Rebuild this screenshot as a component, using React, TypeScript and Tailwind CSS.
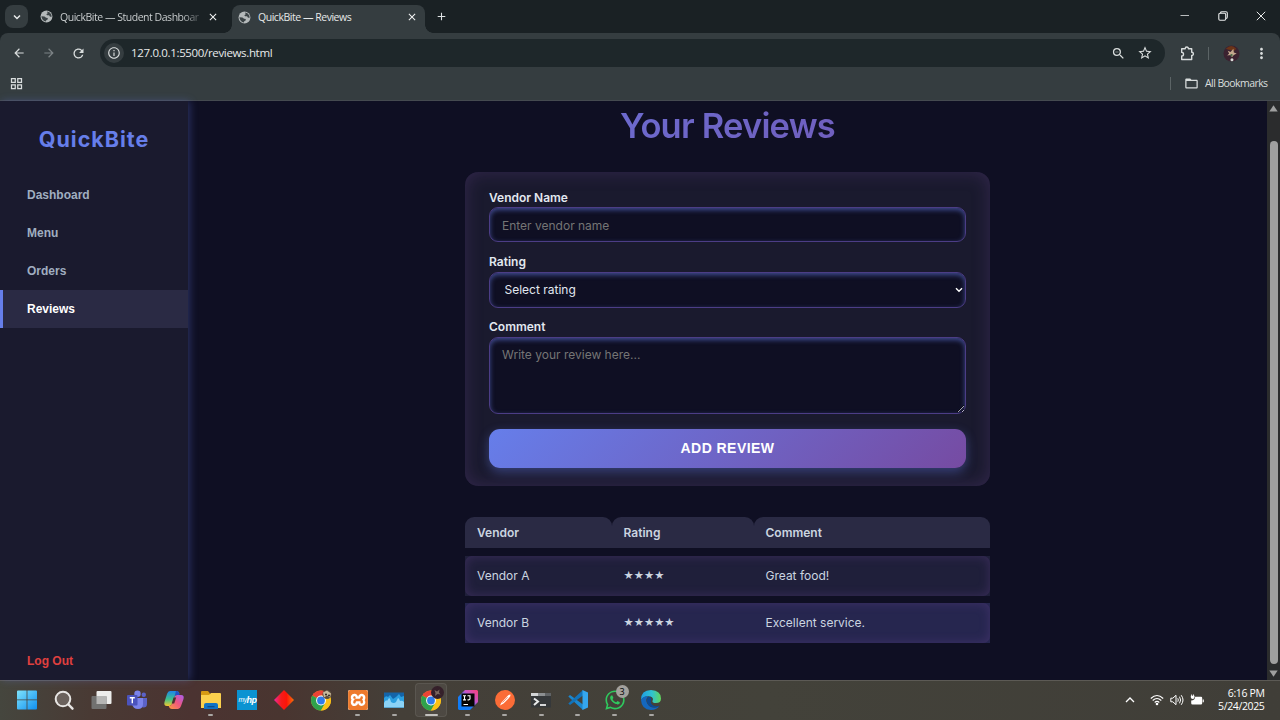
import React from "react";
import {
  MdArrowBack,
  MdArrowForward,
  MdRefresh,
  MdInfoOutline,
  MdGridView,
  MdMoreVert,
  MdFolderOpen,
  MdZoomOut,
  MdStarBorder,
  MdClose,
  MdAdd,
} from "react-icons/md";
import { SiXampp } from "react-icons/si";
import { FaWhatsapp } from "react-icons/fa";

const ui = "font-['Open_Sans','Noto_Sans',sans-serif]";

function Globe() {
  return (
    <svg viewBox="0 0 14 14" className="h-[13px] w-[13px] shrink-0">
      <circle cx="7" cy="7" r="6.400" fill="#b4b9ba" />
      <path d="M7.500 1.600Q10.500 1.700 12 4.600q.6 1.200.4 2.900L10.600 7 9.800 5.700H7.700L6.800 4.500 8.300 3.600Z" fill="#3b4346" />
      <path d="M1.500 6.800 4.800 7l1.700 1.300 1.900.3-.2 1.700-1.500.8-.3 1.300Q2 11.800 1.500 6.800Z" fill="#3b4346" />
    </svg>
  );
}

function TabStrip() {
  return (
    <div className="flex h-[33px] shrink-0 items-end pl-[5px] text-[#dfe3e4]">
      <div className="mb-[5px] flex h-[23px] w-[23px] items-center justify-center rounded-[8px] bg-[#353d40]">
        <svg viewBox="0 0 10 10" className="h-[10px] w-[10px]" fill="none" stroke="#e8eaea" strokeWidth="1.5">
          <path d="M2 3.5 5 6.5 8 3.5" />
        </svg>
      </div>
      <div className="flex h-[33px] w-[204px] items-center pl-[12px]">
        <Globe />
        <span className="ml-[7px] w-[142px] bg-linear-to-r from-[#d5d9da] from-85% to-[#d5d9da]/15 bg-clip-text pt-[2px] text-[10.500px] tracking-[-0.47px] whitespace-nowrap text-transparent">
          QuickBite — Student Dashboar
        </span>
        <MdClose className="ml-[5px] h-[12px] w-[12px] shrink-0 text-[#f3f4f4]" />
      </div>
      <div className="relative flex h-[28px] w-[193px] items-center rounded-t-[8px] bg-[#353d40] pb-[4px] pl-[6px]">
        <Globe />
        <span className="ml-[7px] w-[148px] pt-[2px] text-[10.500px] tracking-[-0.47px] whitespace-nowrap text-[#e5e8e8]">
          QuickBite — Reviews
        </span>
        <MdClose className="h-[12px] w-[12px] shrink-0 text-[#f3f4f4]" />
        <span className="absolute bottom-0 left-[-8px] h-[8px] w-[8px] bg-[radial-gradient(circle_at_0_0,transparent_7.5px,#353d40_8px)]" />
        <span className="absolute right-[-8px] bottom-0 h-[8px] w-[8px] bg-[radial-gradient(circle_at_100%_0,transparent_7.5px,#353d40_8px)]" />
      </div>
      <MdAdd className="mb-[10px] ml-[10px] h-[13px] w-[13px] text-[#dfe3e4]" />
      <div className="mr-[14px] mb-[12px] ml-auto flex items-center gap-[28px] text-[#e8eaea]">
        <svg viewBox="0 0 10 10" className="h-[10px] w-[10px]" stroke="currentColor" strokeWidth="1">
          <path d="M.5 4.500h8.500" stroke="#b9bdbe" />
        </svg>
        <svg viewBox="0 0 10 10" className="h-[10px] w-[10px]" fill="none" stroke="currentColor" strokeWidth="1.100">
          <rect x="0.8" y="2.300" width="6.900" height="6.900" rx="1.200" />
          <path d="M2.600 2.200V1.900Q2.600.7 4 .7h4Q9.300.7 9.300 2v4Q9.300 7.400 7.900 7.400" />
        </svg>
        <svg viewBox="0 0 10 10" className="h-[10px] w-[10px]" stroke="currentColor" strokeWidth="1">
          <path d="M.8.8 9.200 9.200M9.200.8.8 9.200" />
        </svg>
      </div>
    </div>
  );
}

function Toolbar() {
  return (
    <div className="flex h-[67px] shrink-0 flex-col rounded-t-[8px] bg-[#353d40] text-[#d9dddd]">
      <div className="flex h-[40px] items-center pl-[12px]">
        <MdArrowBack className="h-[14px] w-[14px]" />
        <MdArrowForward className="ml-[16px] h-[14px] w-[14px] text-[#7d8486]" />
        <MdRefresh className="ml-[15px] h-[15px] w-[15px]" />
        <div className="ml-[14px] flex h-[28px] w-[1065px] items-center rounded-full bg-[#1e272a] pr-[12px] pl-[4px]">
          <div className="flex h-[20px] w-[20px] items-center justify-center rounded-full bg-[#353d40]">
            <MdInfoOutline className="h-[14px] w-[14px]" />
          </div>
          <span className="ml-[7px] text-[11.500px] tracking-[-0.34px] whitespace-nowrap text-[#e8eaea]">
            127.0.0.1:5500/reviews.html
          </span>
          <MdZoomOut className="ml-auto h-[15px] w-[15px]" />
          <MdStarBorder className="ml-[11px] h-[16px] w-[16px]" />
        </div>
        <svg viewBox="0 0 17 17" className="ml-[14px] h-[17px] w-[17px]" fill="none" stroke="currentColor" strokeWidth="1.400" strokeLinejoin="round">
          <path d="M2.700 3.700H6.200Q6.200 2 7.800 2T9.400 3.700h3.300V7.200Q14.400 7.200 14.400 8.800T12.700 10.400v4.100h-10V11Q4.500 11 4.500 9.200T2.700 7.400Z" />
        </svg>
        <span className="ml-[12px] h-[13px] w-px bg-[#5c6466]" />
        <svg viewBox="0 0 18 18" className="ml-[14px] h-[17px] w-[17px]">
          <circle cx="9" cy="9" r="8.500" fill="#3b2230" />
          <path d="M3 4Q9-2 14 4L12 6 6 5Z" fill="#6b3418" />
          <path d="M5 6l3 1.500L11 4l.5 4 3 1-3 1.500L9.500 13 8 10.500 4.500 11 6.500 9Z" fill="#c4a88e" />
          <path d="M8 9.500h2V12H8z" fill="#4c6b4b" />
          <circle cx="9.500" cy="15.500" r="1.600" fill="#d8dbd8" />
        </svg>
        <MdMoreVert className="ml-[13px] h-[17px] w-[17px]" />
      </div>
      <div className="flex h-[21px] items-center pl-[9px]">
        <MdGridView className="h-[15px] w-[15px]" />
        <span className="ml-auto h-[13px] w-px bg-[#5c6466]" />
        <MdFolderOpen className="ml-[13px] h-[15px] w-[15px]" />
        <span className="mr-[12px] ml-[6px] w-[63px] text-[10.500px] tracking-[-0.57px] whitespace-nowrap">
          All Bookmarks
        </span>
      </div>
    </div>
  );
}

const links = ["Dashboard", "Menu", "Orders", "Reviews"];

function Sidebar() {
  return (
    <aside className="relative flex w-[188px] shrink-0 flex-col bg-[#1a1a2e] font-['Liberation_Sans',sans-serif] text-[12px] font-bold shadow-[2px_0_8px_rgba(102,126,234,0.3)]">
      <div className="mt-[24px] flex h-[28px] items-center justify-center font-['Inter',sans-serif] text-[21.500px] font-bold tracking-[1.0px] text-[#667eea]">
        QuickBite
      </div>
      <nav className="mt-[23px] flex flex-col">
        {links.map((l) => (
          <a
            key={l}
            className={
              l === "Reviews"
                ? "flex h-[38px] items-center border-l-[3px] border-[#667eea] bg-[#2a2a44] pl-[24px] text-white"
                : "flex h-[38px] items-center border-l-[3px] border-transparent pl-[24px] text-[#a0aec0]"
            }
          >
            {l}
          </a>
        ))}
      </nav>
      <a className="mt-auto mb-[11px] pl-[27px] leading-[16px] text-[#e0403f]">Log Out</a>
    </aside>
  );
}

const field =
  "block w-full rounded-[9px] border border-[#4c3d86] bg-[#0f0f23] text-[12px] shadow-[inset_0_2px_5px_rgba(102,126,234,0.55)] outline-none placeholder:text-[#757575]";

function ReviewForm() {
  return (
    <form className="mt-[26px] h-[314px] w-[525px] rounded-[13px] bg-[#1a1a2e] px-[24px] pt-[17px] text-[12px] font-semibold text-[#e2e8f0] shadow-[inset_0_0_18px_rgba(118,75,162,0.28)]">
      <label className="block h-[18px] leading-[17px]">Vendor Name</label>
      <input
        placeholder="Enter vendor name"
        className={field + " h-[35px] px-[12px] pt-[2px] font-normal"}
      />
      <label className="mt-[11px] block h-[19px] leading-[17px]">Rating</label>
      <div className="relative">
        <select className={field + " h-[36px] appearance-none pr-[20px] pb-px pl-[14.500px] font-normal text-[#e2e8f0]"}>
          <option>Select rating</option>
        </select>
        <svg viewBox="0 0 8 6" className="absolute top-[15px] right-[3px] h-[6px] w-[8px]" fill="none" stroke="#fff" strokeWidth="1.400">
          <path d="M1 1.200 4 4.200 7 1.200" />
        </svg>
      </div>
      <label className="mt-[11px] block h-[18px] leading-[16px]">Comment</label>
      <textarea
        placeholder="Write your review here..."
        className={field + " h-[77px] resize px-[12px] py-[8px] leading-[17px] font-normal"}
      />
      <button
        type="button"
        className="mt-[15px] block h-[39px] w-full rounded-[11px] bg-[linear-gradient(135deg,#667eea,#764ba2)] font-['Liberation_Sans',sans-serif] text-[14px] font-bold tracking-[0.45px] text-white shadow-[0_4px_11px_rgba(102,126,234,0.4)]"
      >
        ADD REVIEW
      </button>
    </form>
  );
}

const rows = [
  { vendor: "Vendor A", stars: "★★★★", comment: "Great food!", alt: false },
  { vendor: "Vendor B", stars: "★★★★★", comment: "Excellent service.", alt: true },
];

function ReviewTable() {
  return (
    <div className="mt-[31px] flex w-[525px] flex-col gap-[7.500px] text-[12px] text-[#cbd5e0]">
      <div className="grid h-[31px] grid-cols-[146.500px_142px_236.500px] font-semibold">
        {["Vendor", "Rating", "Comment"].map((h) => (
          <div key={h} className="flex items-center rounded-t-[9px] bg-[#2a2a44] pt-px pl-[12px]">
            {h}
          </div>
        ))}
      </div>
      {rows.map((r) => (
        <div key={r.vendor} className={r.alt ? "bg-[#26264f]" : "bg-[#1f1f3a]"}>
          <div className="grid h-[40px] grid-cols-[146.500px_142px_236.500px] items-center rounded-[7px] shadow-[inset_0_0_11px_rgba(118,75,162,0.32)]">
            <span className="pl-[12px]">{r.vendor}</span>
            <span className="pl-[12px] font-['DejaVu_Sans',sans-serif] text-[11.400px]">{r.stars}</span>
            <span className="pl-[12px]">{r.comment}</span>
          </div>
        </div>
      ))}
    </div>
  );
}

function Scrollbar() {
  return (
    <div className="flex w-[13px] shrink-0 flex-col items-center bg-[#2b2c2d] pt-[4px] pb-[3px]">
      <svg viewBox="0 0 9 7" className="h-[7px] w-[9px]" fill="#9f9f9f">
        <path d="M4.500.3 8.700 6.500H.3Z" />
      </svg>
      <div className="mt-[29px] w-[8px] flex-1 rounded-full bg-[#9f9f9f]" />
      <svg viewBox="0 0 9 7" className="mt-[6px] h-[7px] w-[9px]" fill="#9f9f9f">
        <path d="M4.500 6.700 8.700.5H.3Z" />
      </svg>
    </div>
  );
}

function ChromeLogo({ busy }: { busy?: boolean }) {
  return (
    <svg viewBox="0 0 24 24" className="h-[24px] w-[24px] overflow-visible">
      <circle cx="12" cy="12.500" r="10" fill="#fbc116" />
      <path d="M12 12.500 3.340 7.500A10 10 0 0 1 20.660 7.500Z" fill="#ea4335" />
      <path d="M12 12.500 3.340 7.500A10 10 0 0 0 12 22.500L16.300 15Z" fill="#2fa24c" />
      <path d="M12 7.500h8.660A10 10 0 0 1 12 22.500l4.300-7.500Z" fill="#fbc116" />
      <circle cx="12" cy="12.500" r="4.900" fill="#fff" />
      <circle cx="12" cy="12.500" r="3.900" fill="#2f7bea" />
      {busy ? (
        <g>
          <circle cx="18.500" cy="4.500" r="6.500" fill="#35202a" />
          <path d="M15.500 2l2.500 1.500L20.500 1.500l-.5 3 1.500 2-3-.5-2.500 2 .5-3Z" fill="#7a665c" />
        </g>
      ) : (
        <g>
          <circle cx="18" cy="6.500" r="4.500" fill="#5b4d3e" />
          <path d="M14 4.500l4-2 4 3-1 4-3-2-3 2Z" fill="#c7b99c" />
          <circle cx="17" cy="6.500" r="1" fill="#2c2622" />
          <circle cx="20" cy="7.500" r="1" fill="#2c2622" />
        </g>
      )}
    </svg>
  );
}

const cls = "h-[22px] w-[22px]";

const apps: { name: string; dot: number; icon: React.ReactNode }[] = [
  {
    name: "start",
    dot: 0,
    icon: (
      <svg viewBox="0 0 20 20" className="h-[20px] w-[20px]">
        <defs>
          <linearGradient id="win" x1="0" y1="0" x2="1" y2="1">
            <stop offset="0" stopColor="#7fe3fb" />
            <stop offset="1" stopColor="#0f8ff0" />
          </linearGradient>
        </defs>
        <path d="M1 .5h8.600v8.900H0V1.500Q0 .5 1 .5ZM10.400.5H19q1 0 1 1v7.900h-9.600ZM0 10.200h9.600v9.300H1q-1 0-1-1ZM10.400 10.200H20v8.300q0 1-1 1h-8.600Z" fill="url(#win)" />
      </svg>
    ),
  },
  {
    name: "search",
    dot: 0,
    icon: (
      <svg viewBox="0 0 22 22" className={cls} fill="none">
        <circle cx="10" cy="10" r="7.300" fill="#6b625d" stroke="#e8e6e4" strokeWidth="2" />
        <path d="m15.500 15.500 4 4.200" stroke="#e8e6e4" strokeWidth="2.400" strokeLinecap="round" />
      </svg>
    ),
  },
  {
    name: "task view",
    dot: 0,
    icon: (
      <svg viewBox="0 0 22 22" className={cls}>
        <rect x="6.500" y="2" width="15" height="13" rx="1" fill="#ededec" />
        <rect x="1.500" y="7" width="15" height="13" rx="1" fill="#717170" />
        <path d="M6.500 7h10v8h-10z" fill="#b5b5b4" />
      </svg>
    ),
  },
  {
    name: "teams",
    dot: 0,
    icon: (
      <svg viewBox="0 0 22 22" className={cls}>
        <circle cx="11.500" cy="4.800" r="3.200" fill="#7b83eb" />
        <circle cx="17.800" cy="5.800" r="2.200" fill="#5b62c8" />
        <path d="M15 9h6v6q0 3.500-3.500 3.500T15 16Z" fill="#5b62c8" />
        <path d="M6 9h11v6q0 5-5 5t-6-5Z" fill="#7b83eb" />
        <rect x="1" y="6" width="10.500" height="10.500" rx="1" fill="#4b53bc" />
        <path d="M3.800 8.800h5M6.300 8.800v5.500" stroke="#fff" strokeWidth="1.400" />
      </svg>
    ),
  },
  {
    name: "copilot",
    dot: 0,
    icon: (
      <svg viewBox="0 0 22 22" className={cls}>
        <defs>
          <linearGradient id="cpa" x1="0" y1="0" x2="0" y2="1">
            <stop offset="0" stopColor="#1e86e8" />
            <stop offset=".55" stopColor="#3fc28a" />
            <stop offset="1" stopColor="#f2c72e" />
          </linearGradient>
          <linearGradient id="cpb" x1="1" y1="0" x2="0" y2="1">
            <stop offset="0" stopColor="#a75df0" />
            <stop offset=".5" stopColor="#f0577f" />
            <stop offset="1" stopColor="#fb9c3e" />
          </linearGradient>
        </defs>
        <path d="M7 2h6.500Q16 2 16.500 5L14 6q-2 0-3 3l-1.500 5q-.8 3-3 3H4q-3.500 0-2.500-4L4 5Q5 2 7 2Z" fill="url(#cpa)" />
        <path d="M15 20H9q-2.500 0-3.300-3 2.800 0 3.800-3L11 9q1-3 3-3h4q3.500 0 2.500 4L18 17q-1 3-3 3Z" fill="url(#cpb)" />
        <path d="M10.500 8.500h2.700l-2 6H8.700Z" fill="#4a3230" />
        <path d="M13 2q3 0 3.500 4h-3q-1.500 0-2 1.500Z" fill="#2251c9" />
      </svg>
    ),
  },
  {
    name: "files",
    dot: 5,
    icon: (
      <svg viewBox="0 0 22 22" className={cls}>
        <path d="M1 3q0-1 1-1h6l2 2.500V9H1Z" fill="#d69a14" />
        <path d="M1 6h8l2-2h9q1 0 1 1v14H1Z" fill="#fbd04d" />
        <path d="M4 20v-4q0-2 2-2h10q2 0 2 2v4Z" fill="#1273c4" />
        <path d="M7.500 17h7v1.300h-7z" fill="#0c4d8c" />
      </svg>
    ),
  },
  {
    name: "myhp",
    dot: 0,
    icon: (
      <div className="flex h-[20px] w-[20px] items-center justify-center bg-[#0a93d2] font-['Liberation_Sans',sans-serif] leading-none text-white italic">
        <span className="text-[6.500px] tracking-[-0.3px]">my</span>
        <span className="text-[9px] font-bold tracking-[-0.6px]">hp</span>
      </div>
    ),
  },
  {
    name: "diamond",
    dot: 0,
    icon: (
      <svg viewBox="0 0 22 22" className={cls}>
        <defs>
          <linearGradient id="dia" x1="0" y1="0" x2="1" y2="0">
            <stop offset="0" stopColor="#ee2aa0" />
            <stop offset=".35" stopColor="#f41c1c" />
            <stop offset=".62" stopColor="#fb1408" />
            <stop offset="1" stopColor="#f5720c" />
          </linearGradient>
        </defs>
        <path d="m11 1 10 10-10 10L1 11Z" fill="url(#dia)" />
      </svg>
    ),
  },
  { name: "chrome", dot: 0, icon: <ChromeLogo /> },
  {
    name: "xampp",
    dot: 5,
    icon: (
      <div className="flex h-[20px] w-[20px] items-center justify-center rounded-[2px] bg-[#ee7a2c]">
        <SiXampp className="h-[20px] w-[20px] rounded-[2px] bg-white text-[#ee7a2c]" />
      </div>
    ),
  },
  {
    name: "monitor",
    dot: 5,
    icon: (
      <svg viewBox="0 0 22 22" className={cls}>
        <path d="M1 3.500h20v15H1z" fill="#1464a8" />
        <path d="M1 9q2-3 4-1l2-2 3 4 3-2 3-3 2 3 3-1v11.500H1Z" fill="#2b9fe0" />
        <path d="M1 14q2-4 3-2l2-3q1 0 2 4 3 2 5 0l2-4q1 0 2 3 2-1 4 1v5.500H1Z" fill="#8bd3f7" />
      </svg>
    ),
  },
  { name: "chrome active", dot: 13, icon: <ChromeLogo busy /> },
  {
    name: "idea",
    dot: 5,
    icon: (
      <svg viewBox="0 0 22 22" className={cls}>
        <defs>
          <linearGradient id="ij" x1="1" y1="0" x2="0" y2="1">
            <stop offset="0" stopColor="#fb3f79" />
            <stop offset=".35" stopColor="#c455c8" />
            <stop offset=".6" stopColor="#1a7cf5" />
            <stop offset="1" stopColor="#087cfa" />
          </linearGradient>
        </defs>
        <path d="M8 1h12l1 1v11l-8 8H2l-1-1V8Z" fill="url(#ij)" />
        <path d="M4.500 4.500h13v13h-13z" fill="#050505" />
        <path d="M6 6.700h3M7.500 6.700v4.200M6 10.900h3M10.500 6.700h2.500v3q0 1.200-2.500 1.200M6.500 15.500h4.500" stroke="#fff" strokeWidth="1.100" fill="none" />
      </svg>
    ),
  },
  {
    name: "postman",
    dot: 5,
    icon: (
      <svg viewBox="0 0 22 22" className={cls}>
        <circle cx="11" cy="11" r="10" fill="#fb6c37" />
        <path d="m6 16.500 1.500-3 5-5.500q2-2.300 4-2.500.2 1.800-1.500 3.500L9.500 14.500Z" fill="#fff" />
        <path d="m8.500 13.500 5-5.300" stroke="#fb6c37" strokeWidth=".8" />
      </svg>
    ),
  },
  {
    name: "terminal",
    dot: 5,
    icon: (
      <svg viewBox="0 0 22 22" className={cls}>
        <path d="M1 4h20v14.500H1z" fill="#35383a" />
        <path d="M1 4h7v3H1z" fill="#d3d5d6" />
        <path d="M8 4h7v3H8z" fill="#8c8f91" />
        <path d="M15 4h6v3h-6z" fill="#606365" />
        <path d="m4 9.500 4 3-4 3.500" fill="none" stroke="#e9eaea" strokeWidth="2" />
        <path d="M10 16h6" stroke="#e9eaea" strokeWidth="1.800" />
      </svg>
    ),
  },
  {
    name: "vscode",
    dot: 5,
    icon: (
      <svg viewBox="0 0 22 22" className={cls}>
        <path d="m1.300 7.500 1.700-1.500L16 15.500V21Z" fill="#1b87cf" />
        <path d="M1.300 14.500 3 16 16 6.500V1Z" fill="#1273ba" />
        <path d="m15.500 1 5.500 2.500v15L15.500 21Z" fill="#35a6ee" />
      </svg>
    ),
  },
  {
    name: "whatsapp",
    dot: 5,
    icon: (
      <div className={ui + " relative"}>
        <FaWhatsapp className="h-[22px] w-[22px] text-[#2fc95e]" />
        <span className="absolute top-[-4px] left-[12px] flex h-[13px] w-[13px] items-center justify-center rounded-full bg-[#a3a19d] text-[9px] leading-none text-black">
          3
        </span>
      </div>
    ),
  },
  {
    name: "edge",
    dot: 5,
    icon: (
      <svg viewBox="0 0 22 22" className={cls}>
        <defs>
          <linearGradient id="ed" x1="0" y1=".3" x2="1" y2=".3">
            <stop offset="0" stopColor="#1e9de4" />
            <stop offset=".55" stopColor="#30c3d0" />
            <stop offset="1" stopColor="#62d65a" />
          </linearGradient>
        </defs>
        <path d="M1 11Q1 1 11 1q10 .500 10 8.500 0 4.500-5 4.500-4 0-3.500-2 1.500-3.500-2-4.500Q4 6.500 1 11Z" fill="url(#ed)" />
        <path d="M1 11q2.500-4.500 7.500-3.500-3.500 2-1.500 6.500 2.500 5 8 4.500 3-.5 4.500-1.500Q16.500 21 11 21 1.500 20.500 1 11Z" fill="#1467be" />
        <path d="M8.500 7.800q-3 3.200-.7 7.200 3 4.500 9.200 3.200 2.500-.7 2.500-1.500-4 1.300-7-.8-3-2.400-1-5.900-.5-2-3-2.200Z" fill="#0c4a94" />
      </svg>
    ),
  },
];

function Taskbar() {
  return (
    <div className="flex h-[40px] shrink-0 items-stretch border-t border-[#5c5a55] bg-[linear-gradient(90deg,#45463e_0%,#493a34_7%,#4b3331_15%,#493530_22%,#443f38_31%,#43423a_60%,#403e38_100%)] pb-px pl-[8.800px]">
      {apps.map((a) => (
        <div key={a.name} className="relative flex w-[36.720px] items-center justify-center">
          {a.dot === 13 && <span className="absolute inset-x-[2px] inset-y-[2px] rounded-[4px] border border-white/8 bg-white/5" />}
          <span className="relative">{a.icon}</span>
          {a.dot === 5 && <span className="absolute bottom-[3px] h-[2px] w-[5px] rounded-full bg-[#a9a7a4]" />}
          {a.dot === 13 && <span className="absolute bottom-[3px] h-[2px] w-[13px] rounded-full bg-[#c2c0bd]" />}
        </div>
      ))}
      <div className="mr-[15.500px] ml-auto flex items-center text-white">
        <svg viewBox="0 0 10 6" className="h-[6px] w-[10px]" fill="none" stroke="currentColor" strokeWidth="1.300">
          <path d="M1 5 5 1l4 4" />
        </svg>
        <svg viewBox="0 0 14 12" className="ml-[15px] h-[12px] w-[14px]" fill="none" stroke="currentColor" strokeWidth="1.100">
          <path d="M.8 4.500Q7-1.500 13.200 4.500M2.700 6.500Q7 2.500 11.300 6.500M4.700 8.500Q7 6.300 9.300 8.500" />
          <circle cx="7" cy="10" r="1.300" fill="currentColor" stroke="none" />
        </svg>
        <svg viewBox="0 0 14 12" className="ml-[6px] h-[12px] w-[14px]" fill="none" stroke="currentColor" strokeWidth="1">
          <path d="M.8 4.200h2L6 1.300v9.400L2.800 7.800h-2ZM7.800 4.300q1 1.700 0 3.400M9.500 2.700q2.200 3.300 0 6.600M11.200 1.200q3.600 4.800 0 9.600" />
        </svg>
        <svg viewBox="0 0 14 12" className="ml-[6px] h-[12px] w-[14px]">
          <path d="M5.200 2.800H11q1.200 0 1.200 1.200v5.200Q12.200 10.500 11 10.500H2.500Q1.200 10.500 1.200 9.200V6.500Q5 6.500 5.200 2.800Z" fill="#fff" />
          <path d="M12.700 5.500h1.100v2.800h-1.100zM1.200.5h.9v1.200h1V.5H4v1.200h.5v1.500q0 1.800-1.800 1.800T.8 3.200V1.700h.4Z" fill="#fff" />
        </svg>
        <div className={ui + " ml-[13px] flex w-[48px] flex-col items-end text-[10.500px] leading-[13.300px] tracking-[-0.37px] whitespace-nowrap"}>
          <span>6:16 PM</span>
          <span>5/24/2025</span>
        </div>
      </div>
    </div>
  );
}

export default function App() {
  return (
    <div className="flex h-[720px] w-[1280px] flex-col overflow-hidden bg-[#1a2124]">
      <div className={ui + " flex shrink-0 flex-col"}>
        <TabStrip />
        <Toolbar />
      </div>
      <div className="flex h-[580px] border-t border-[#454a50] bg-[#0f0f23]">
        <Sidebar />
        <main className="flex flex-1 flex-col items-center font-['Inter',sans-serif]">
          <h1 className="mt-[4px] flex h-[41px] w-full items-center justify-center bg-[linear-gradient(135deg,#667eea,#764ba2)] bg-clip-text text-[34.500px] font-semibold tracking-[-0.8px] whitespace-nowrap text-transparent">
            Your Reviews
          </h1>
          <ReviewForm />
          <ReviewTable />
        </main>
        <Scrollbar />
      </div>
      <Taskbar />
    </div>
  );
}
